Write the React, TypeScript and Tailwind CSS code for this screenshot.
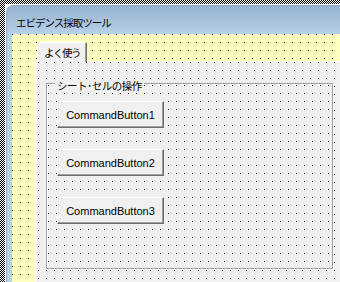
// 8px grid of 1px black dots: black base shows only where both line layers are transparent
const yellowDots =
  "bg-black bg-[image:repeating-linear-gradient(90deg,transparent_0_1px,#ffffc0_1px_8px),repeating-linear-gradient(180deg,transparent_0_1px,#ffffc0_1px_8px)]";
const grayDots =
  "bg-black bg-[image:repeating-linear-gradient(90deg,transparent_0_1px,#f0f0f0_1px_8px),repeating-linear-gradient(180deg,transparent_0_1px,#f0f0f0_1px_8px)]";

const buttonClass =
  "w-[107px] h-[27px] shrink-0 flex items-center justify-center bg-[#f0f0f0] border border-t-white border-l-white border-b-[#696969] border-r-[#696969] shadow-[inset_-1px_-1px_0_#a0a0a0] font-['Liberation_Sans',sans-serif] text-[11px] leading-[12px] text-black";

export default function App() {
  return (
    <div className="w-[340px] h-[282px] overflow-hidden bg-[image:repeating-conic-gradient(#000_0_25%,#fff_0_50%)] bg-[length:2px_2px] pl-[5px] pt-[4px] font-['Noto_Sans_CJK_JP',sans-serif] text-black">
      <div className="h-full bg-white pl-px pt-px">
        {/* form window */}
        <div className="h-full flex flex-col rounded-tl-[7px] border-l border-t border-[#8aa4c0] bg-[#b9d1ea] overflow-hidden">
          <div className="h-[28px] shrink-0 bg-linear-to-b from-[#97b3cf] to-[#b8d0e9] pl-[9px] pt-[11px] text-[10.5px] leading-[12px] tracking-[-1px]">
            エビデンス採取ツール
          </div>

          <div className="flex-1 flex pl-[5px]">
            {/* client area */}
            <div className={`flex-1 ${yellowDots} pl-[23px] pt-[8px]`}>
              <div className="h-full flex flex-col">
                {/* tabs */}
                <div className="flex pl-[2px]">
                  <div className="relative z-10 -mb-px h-[20px] w-[50px] flex items-center justify-center bg-[#f0f0f0] border-t border-l border-r border-t-white border-l-white border-r-[#696969] shadow-[inset_-1px_0_0_#a0a0a0] text-[10.5px] leading-[12px] tracking-[-1.5px]">
                    よく使う
                  </div>
                </div>

                {/* page */}
                <div className={`flex-1 ${grayDots} bg-[position:2px_0px] border-l border-t border-white pl-[10px] pt-[21px]`}>
                  <div className={`relative w-[287px] h-[186px] ${grayDots} bg-[position:1px_1px] border border-[#a0a0a0] shadow-[1px_1px_0_#fff,inset_1px_1px_0_#fff] pl-[10px] pt-[17px] flex flex-col gap-[21px]`}>
                    <span className="absolute left-[8px] top-[-4px] px-[2px] bg-[#f0f0f0] text-[10.5px] leading-[12px] tracking-[-0.5px]">
                      シート･セルの操作
                    </span>
                    <button className={buttonClass}>CommandButton1</button>
                    <button className={buttonClass}>CommandButton2</button>
                    <button className={buttonClass}>CommandButton3</button>
                  </div>
                </div>
              </div>
            </div>
          </div>
        </div>
      </div>
    </div>
  );
}
